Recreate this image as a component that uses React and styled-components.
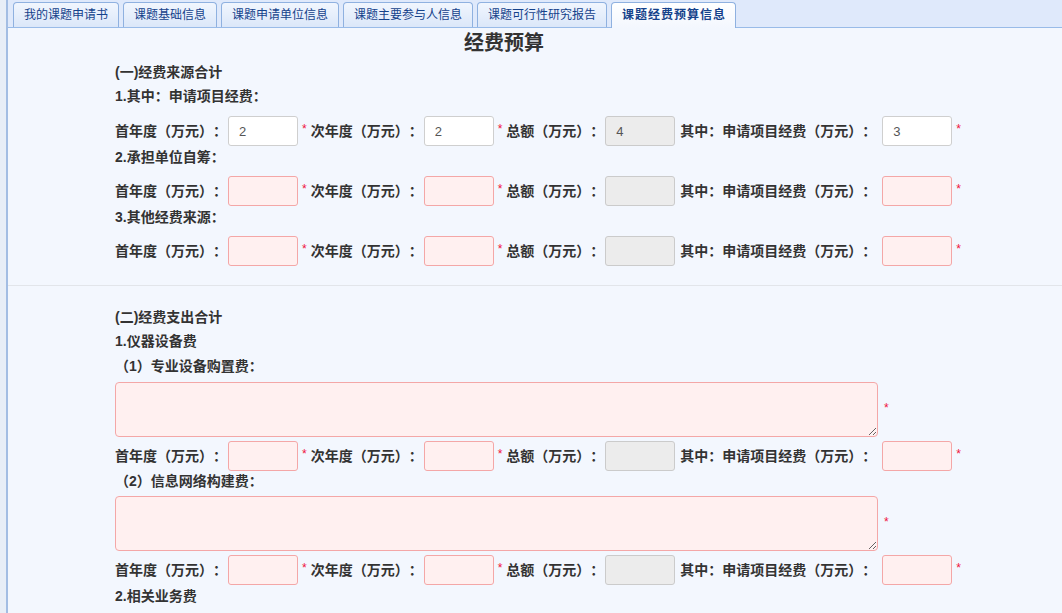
import React from "react";
import styled, { createGlobalStyle, css } from "styled-components";

const GlobalStyle = createGlobalStyle`
  html, body { margin: 0; padding: 0; }
  body {
    background: #e8eef7;
    font-family: "Liberation Sans", "Noto Sans CJK SC", sans-serif;
    color: #333;
    overflow: hidden;
    text-spacing-trim: space-all;
  }
  * { box-sizing: border-box; }
`;

const Page = styled.div`
  padding-left: 6px;
  min-height: 100vh;
`;

const Panel = styled.div`
  border-left: 2px solid #a3bde3;
  background: #f3f7fe;
  min-height: 100vh;
`;

const TabStrip = styled.div`
  display: flex;
  align-items: flex-end;
  height: 28px;
  padding-left: 5px;
  background: #dfe9fb;
  border-bottom: 1px solid #99bbe8;
`;

const Tab = styled.div`
  height: 25px;
  margin-right: 4px;
  padding: 0 10px;
  border: 1px solid #8fb1e0;
  border-bottom: none;
  border-radius: 4px 4px 0 0;
  background: linear-gradient(#f1f6fe, #dbe7f9);
  color: #15428b;
  font-size: 12px;
  line-height: 24px;
  white-space: nowrap;
  ${(p) =>
    p.$active &&
    css`
      height: 26px;
      margin-bottom: -1px;
      padding: 0 9px 0 10px;
      background: linear-gradient(#ffffff, #f3f7fe);
      font-weight: bold;
      letter-spacing: 1px;
    `}
`;

const Content = styled.div`
  margin-left: 107px;
  width: 778px;
`;

const Title = styled.div`
  text-align: center;
  font-size: 20px;
  font-weight: bold;
  line-height: 30px;
  color: #333;
`;

const SectionHead = styled.div`
  margin-top: ${(p) => p.$mt || 0}px;
  font-size: 14px;
  font-weight: bold;
  line-height: 24px;
  white-space: nowrap;
`;

const SubHead = styled.div`
  font-size: 14px;
  font-weight: bold;
  line-height: ${(p) => p.$lh || 22}px;
  white-space: nowrap;
`;

const FieldRow = styled.div`
  display: flex;
  align-items: center;
  height: 30px;
  margin-top: ${(p) => p.$mt || 8}px;
  width: max-content;
`;

const Label = styled.span`
  flex-shrink: 0;
  margin-left: ${(p) => p.$ml || 0}px;
  font-size: 14px;
  font-weight: bold;
  line-height: 20px;
  white-space: nowrap;
  color: #333;
`;

const variants = {
  filled: css`
    background: #ffffff;
    border-color: #cfcfcf;
  `,
  empty: css`
    background: #fff0f0;
    border-color: #f4a7a7;
  `,
  disabled: css`
    background: #ececec;
    border-color: #cbcbcb;
  `,
};

const Input = styled.input`
  flex-shrink: 0;
  width: 70px;
  height: 30px;
  margin: 0 0 0 ${(p) => p.$ml || 1}px;
  padding: 0 0 0 10px;
  border: 1px solid;
  border-radius: 3px;
  font-family: "Liberation Sans", sans-serif;
  font-size: 13px;
  color: #555;
  outline: none;
  ${(p) => variants[p.$variant]}
`;

const Star = styled.span`
  flex-shrink: 0;
  margin: 0 4px 4px ${(p) => p.$ml || 4}px;
  font-family: "Liberation Sans", sans-serif;
  font-size: 12px;
  line-height: 12px;
  color: #f0143c;
`;

const TextRow = styled.div`
  display: flex;
  align-items: center;
  margin-top: ${(p) => p.$mt || 3}px;
  width: max-content;
`;

const TextArea = styled.textarea`
  display: block;
  width: 763px;
  height: 55px;
  margin: 0;
  border: 1px solid #f4a7a7;
  border-radius: 4px;
  background: #fff0f0;
  outline: none;
  resize: both;
  font-family: "Liberation Sans", sans-serif;
`;

const Divider = styled.div`
  margin-top: 19px;
  height: 1px;
  background: #e2e5ea;
`;

function AmountRow({ values = ["", "", "", ""], mt }) {
  const v = (i) => (values[i] ? "filled" : "empty");
  return (
    <FieldRow $mt={mt}>
      <Label>首年度（万元）：</Label>
      <Input $variant={v(0)} defaultValue={values[0]} />
      <Star>*</Star>
      <Label>次年度（万元）：</Label>
      <Input $variant={v(1)} defaultValue={values[1]} />
      <Star>*</Star>
      <Label>总额（万元）：</Label>
      <Input $variant="disabled" disabled defaultValue={values[2]} />
      <Label $ml={5}>其中：申请项目经费（万元）：</Label>
      <Input $variant={v(3)} $ml={6} defaultValue={values[3]} />
      <Star>*</Star>
    </FieldRow>
  );
}

const tabs = [
  "我的课题申请书",
  "课题基础信息",
  "课题申请单位信息",
  "课题主要参与人信息",
  "课题可行性研究报告",
  "课题经费预算信息",
];

export default function App() {
  return (
    <>
      <GlobalStyle />
      <Page>
        <Panel>
          <TabStrip>
            {tabs.map((t, i) => (
              <Tab key={t} $active={i === tabs.length - 1}>
                {t}
              </Tab>
            ))}
          </TabStrip>
          <Content>
            <Title>经费预算</Title>
            <SectionHead $mt={2}>(一)经费来源合计</SectionHead>
            <SubHead $lh={24}>1.其中：申请项目经费：</SubHead>
            <AmountRow values={["2", "2", "4", "3"]} />
            <SubHead>2.承担单位自筹：</SubHead>
            <AmountRow />
            <SubHead>3.其他经费来源：</SubHead>
            <AmountRow />
          </Content>
          <Divider />
          <Content>
            <SectionHead $mt={19}>(二)经费支出合计</SectionHead>
            <SubHead $lh={24}>1.仪器设备费</SubHead>
            <SubHead $lh={26}>（1）专业设备购置费：</SubHead>
            <TextRow $mt={3}>
              <TextArea />
              <Star $ml={6}>*</Star>
            </TextRow>
            <AmountRow mt={4} />
            <SubHead $lh={20}>（2）信息网络构建费：</SubHead>
            <TextRow $mt={5}>
              <TextArea />
              <Star $ml={6}>*</Star>
            </TextRow>
            <AmountRow mt={4} />
            <SubHead>2.相关业务费</SubHead>
          </Content>
        </Panel>
      </Page>
    </>
  );
}
